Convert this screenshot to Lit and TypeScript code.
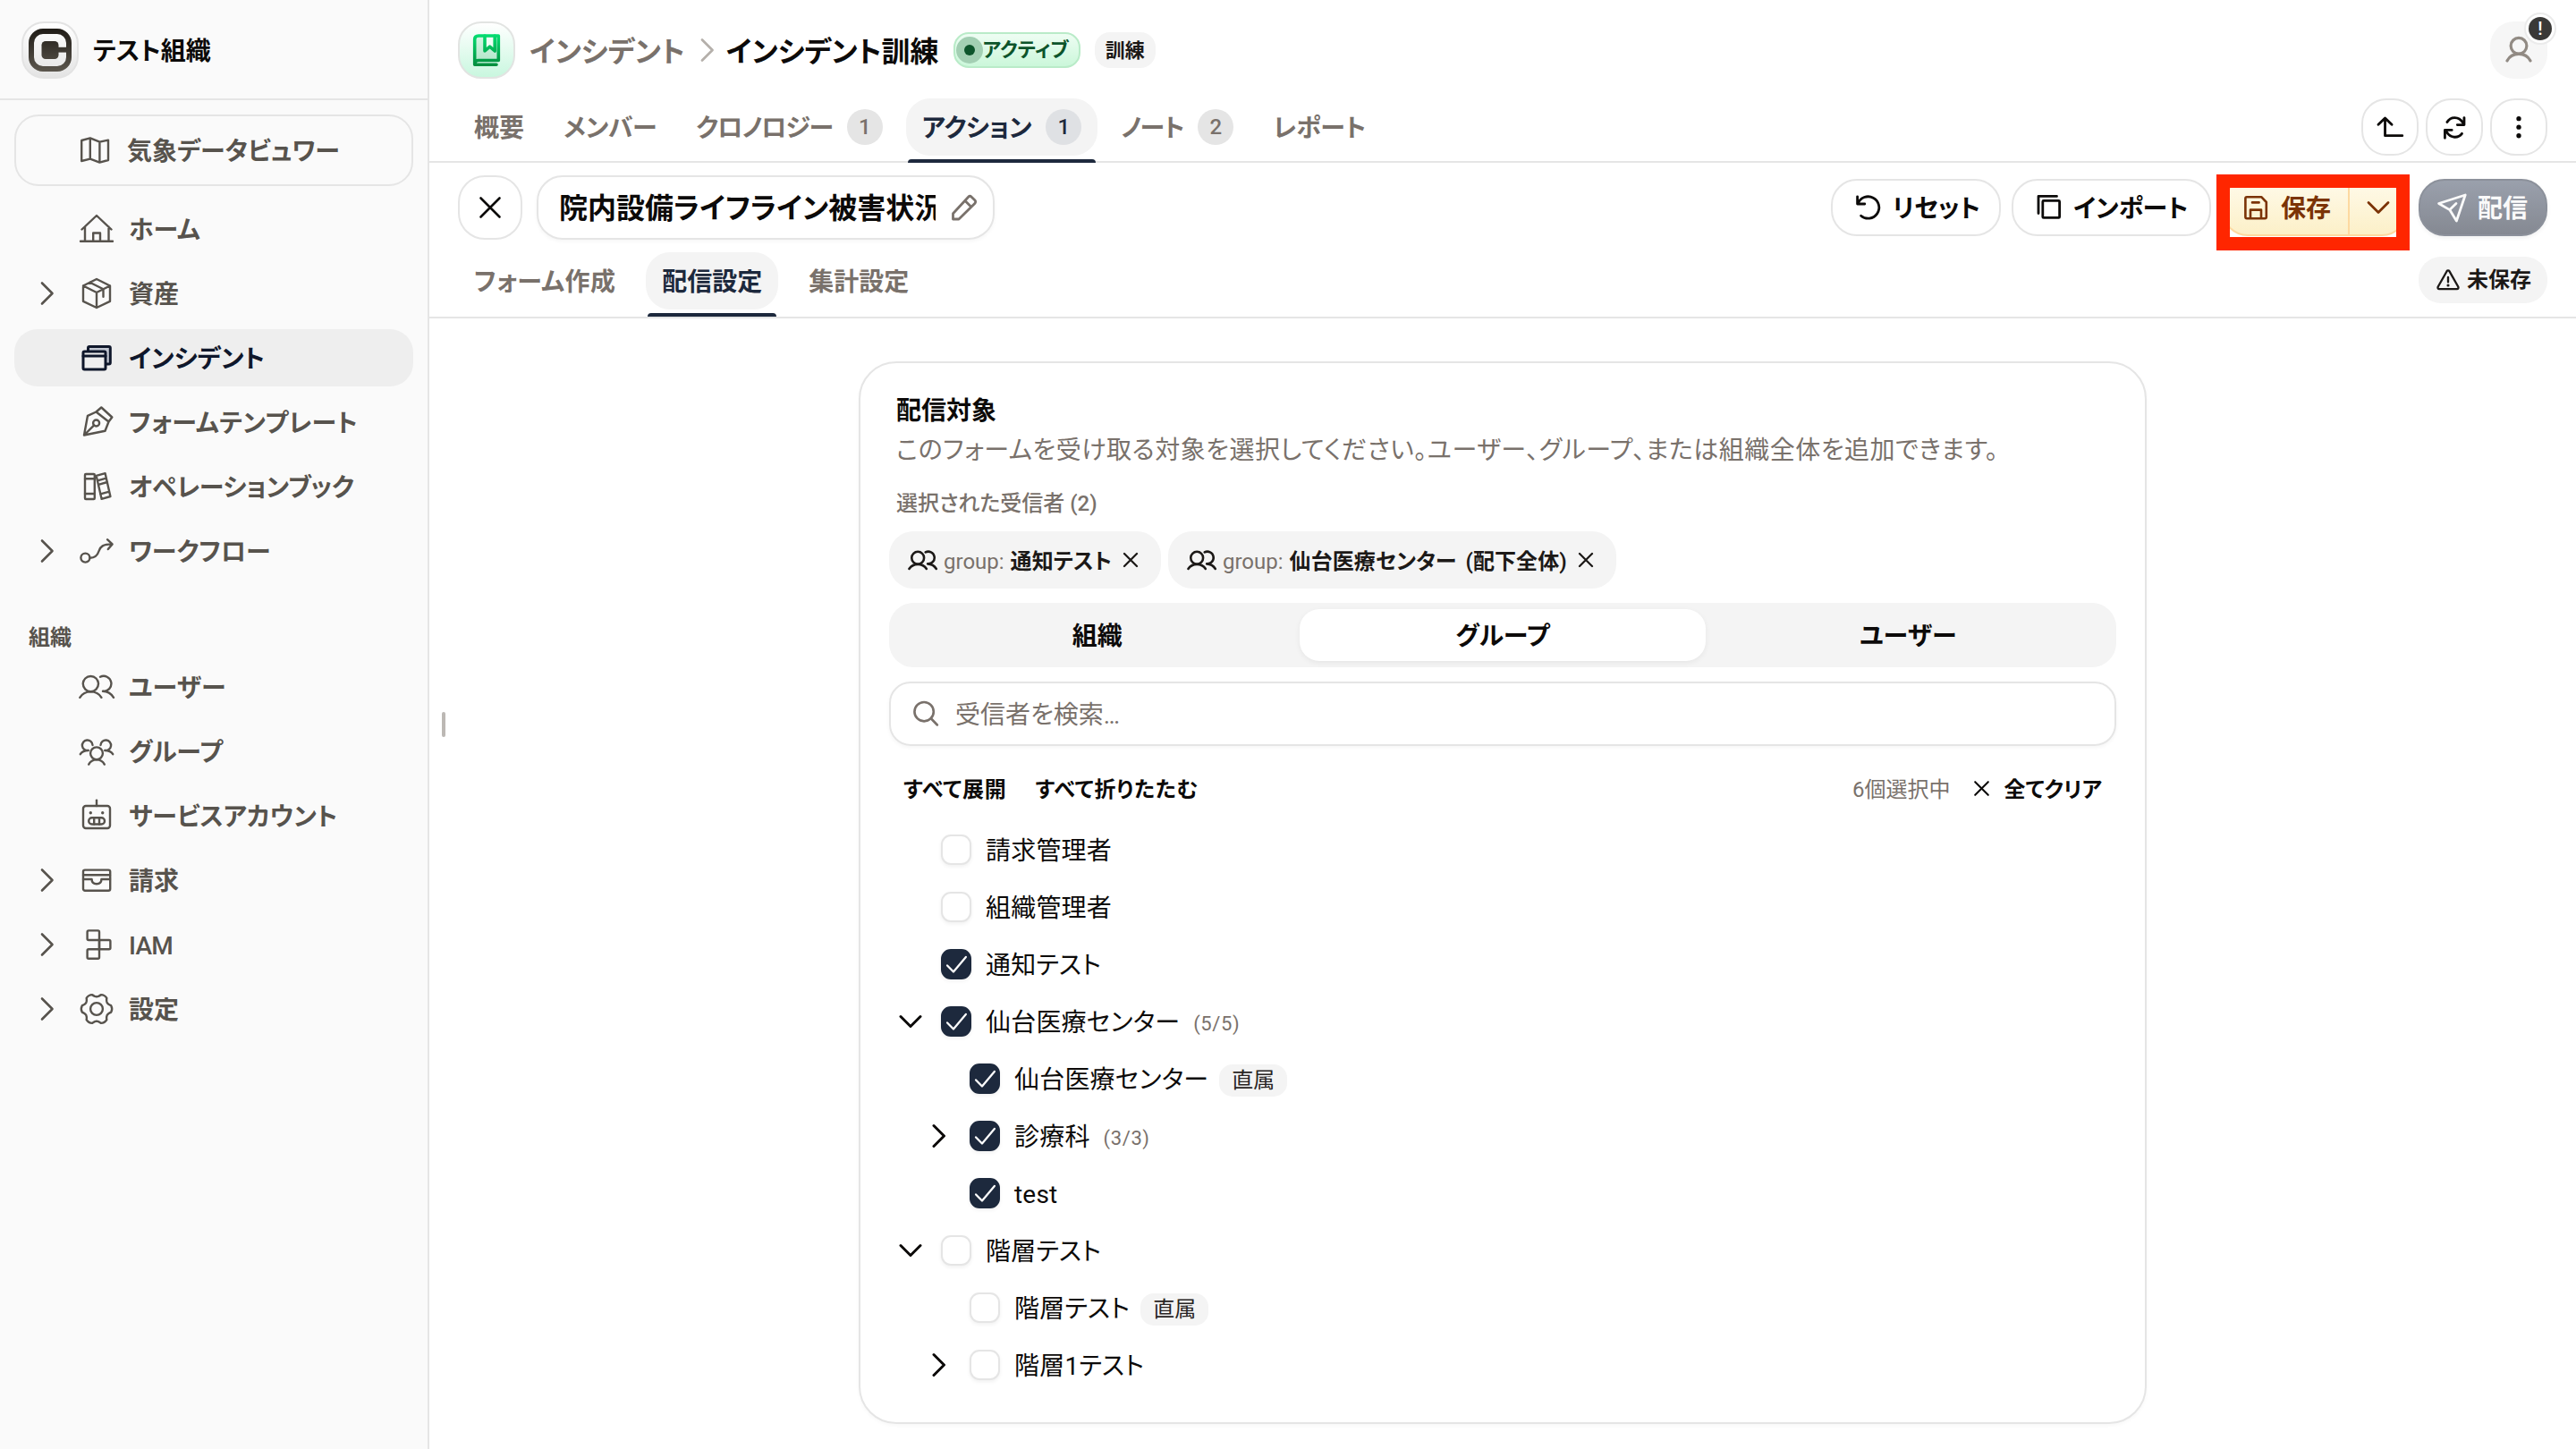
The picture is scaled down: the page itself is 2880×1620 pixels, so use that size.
import { LitElement, html, svg, css, nothing, TemplateResult, SVGTemplateResult } from "lit";
import { customElement, property } from "lit/decorators.js";

const gearPath = (): string => {
  const pt = (deg: number, r: number) => {
    const a = (deg * Math.PI) / 180;
    return `${(18 + r * Math.cos(a)).toFixed(2)} ${(18 + r * Math.sin(a)).toFixed(2)}`;
  };
  let d = "";
  for (let k = 0; k < 6; k++) {
    const c = k * 60;
    d += `${k === 0 ? "M" : "L"}${pt(c - 22, 14.2)} Q${pt(c - 16, 15.2)} ${pt(c - 13, 16.6)} Q${pt(c, 18.2)} ${pt(c + 13, 16.6)} Q${pt(c + 16, 15.2)} ${pt(c + 22, 14.2)} L${pt(c + 30, 13.6)} `;
  }
  return d + "Z";
};

const ICONS: Record<string, SVGTemplateResult> = {
  map: svg`<path d="M3.2 7L12.8 4.4L23.4 8.6L33 6.6V29L23.4 31.6L12.8 27.6L3.2 30Z M12.8 4.4V27.6 M23.4 8.6V31.6"/>`,
  home: svg`<path d="M1.5 18.5L18 3L34.5 18.5 M5 15.5V31.8 M31.5 15.5V31.8 M0 31.8H36 M14.2 31.5V22.5H22V31.5"/>`,
  box: svg`<path d="M18 2L33 9.5V26.8L18 34L3 26.8V9.5Z M3 9.5L18 17L33 9.5 M18 17V34 M10.5 5.8L25.5 13.3V21.8"/>`,
  windows: svg`<rect x="8.5" y="5.5" width="24.8" height="19.5" rx="1.5" fill="#c1c6d1"/><rect x="3" y="11" width="25" height="20" rx="1.5" fill="#efefef"/><path d="M3 16H28"/>`,
  pen: svg`<path d="M4 32.5L8 10.8L17.5 6.5L31.5 17.5L27.5 27.8Z M17.5 6.5L23.3 1.5L35.3 12.5L31.5 17.5 M4 32.5L15.2 21.4"/><circle cx="17.6" cy="19" r="3.5"/>`,
  books: svg`<rect x="5" y="4" width="10.8" height="28" rx="1"/><path d="M5 9.3H15.8 M5 26H15.8 M17.6 5.8L27.6 3.2L33.4 29L23.6 31.8Z M18.9 11.3L28.9 8.6 M20 15.8L30 13 M22.2 26.4L32.2 23.6"/>`,
  flow: svg`<circle cx="5.4" cy="25.6" r="5"/><path d="M10.6 25.8C16.5 25.8 19 23 20.6 18C22.2 13 25 10.6 35.2 10.4 M30 5.2L35.6 10.4L30.8 16"/>`,
  users: svg`<circle cx="11.4" cy="14.6" r="8.6"/><path d="M-.7 29.8C2 25.6 6 23.4 11.4 23.4S20.800 25.600 23.4 29.800 M22 6.800A8.500 8.500 0 1 1 25 22.800C30 23 34 25 37 29.800"/>`,
  group: svg`<circle cx="18" cy="20.300" r="6.900"/><path d="M9.200 32.600C11 29.200 14 27.400 18 27.400S25 29.200 26.800 32.600 M13.500 11A5.800 5.800 0 1 0 8.800 17C4.500 17 1.500 18.300 -.2 21.200 M22.500 11A5.800 5.800 0 1 1 27.200 17C31.500 17 34.500 18.300 36.200 21.200"/>`,
  robot: svg`<rect x="3" y="7" width="30" height="25" rx="3"/><path d="M18 .6V7"/><circle cx="11.3" cy="14.800" r="1.700" fill="currentColor" stroke="none"/><circle cx="24.700" cy="14.800" r="1.700" fill="currentColor" stroke="none"/><rect x="9.200" y="20.300" width="17.800" height="7.200" rx="3.600"/><path d="M15.200 20.300V27.500 M21 20.300V27.500"/>`,
  billing: svg`<rect x="3" y="6.600" width="30.200" height="23.200" rx="2"/><path d="M3 12.200H33 M3 17H12.600C12.600 20.500 15 22.200 18 22.200S23.400 20.500 23.400 17H33"/>`,
  iam: svg`<rect x="7.600" y="2.400" width="13.400" height="10.600" rx="1.500"/><rect x="21" y="13" width="12.400" height="10.200" rx="1.500"/><rect x="7.600" y="23.200" width="13.400" height="10.600" rx="1.500"/><path d="M21 12V24"/>`,
  gear: svg`<circle cx="18" cy="18" r="6.900"/><path d=${gearPath()}/>`,
  right: svg`<path d="M12 6.500L23.500 18L12 29.500"/>`,
  down: svg`<path d="M7 12.500L18 23.500L29 12.500"/>`,
  close: svg`<path d="M7.500 7.500L28.500 28.500 M28.500 7.500L7.500 28.500"/>`,
  book: svg`<defs><linearGradient id="bk" gradientUnits="userSpaceOnUse" x1="0" y1="0" x2="0" y2="36"><stop offset="0" stop-color="#05df72"/><stop offset="1" stop-color="#008c3c"/></linearGradient><linearGradient id="bf" gradientUnits="userSpaceOnUse" x1="0" y1="0" x2="0" y2="36"><stop offset="0" stop-color="#d8f8e6"/><stop offset="1" stop-color="#aee3c6"/></linearGradient></defs><g stroke="url(#bk)"><path fill="url(#bf)" stroke="none" d="M31.300 2H9C6 2 4.700 3.500 4.700 6V33L8.500 29.500H31.300Z"/><path fill="#effdf5" d="M16 2V19L21.600 14.200L27.200 19V2"/><path d="M31.300 2H9C6 2 4.700 3.500 4.700 6V34.300H29 M31.300 2V29.500H9C6.500 29.500 4.900 31 4.700 33.500"/></g>`,
  pencil: svg`<path d="M5.500 24.800L22.600 6.200C23.800 5 25 5 26.200 6.200L29.800 9.800C31 11 31 12.200 29.800 13.400L12 31H5.500Z M19 10.500L25.500 17"/>`,
  reset: svg`<path d="M6.200 13.600A12.200 12.200 0 1 1 9.600 27.200 M5.600 5.800V14H13.800"/>`,
  copy: svg`<path d="M26.500 5.400H6V24.500"/><rect x="10.800" y="10.400" width="18.800" height="19" rx="1"/>`,
  save: svg`<path d="M8 6.200H24.200L29.800 12V28.500C29.800 29.600 29.200 30.200 28.200 30.200H8C7 30.200 6.400 29.600 6.400 28.500V7.800C6.400 6.800 7 6.200 8 6.200Z M12 30V20.600H24V30 M14 12.400H21.600"/>`,
  send: svg`<path d="M2.600 13.500L32.200 4L22.400 33L14.800 20.600Z M14.800 20.600L22 13.600"/>`,
  warn: svg`<path d="M16.200 5.400C17 4 19 4 19.800 5.400L32.600 28C33.200 29.600 32.400 31 30.800 31H5.200C3.600 31 2.800 29.600 3.400 28Z M18 14V21"/><circle cx="18" cy="25.800" r="2" fill="currentColor" stroke="none"/>`,
  search: svg`<circle cx="16" cy="15.500" r="11.300"/><path d="M24.200 23.600L31.600 31.200"/>`,
  person: svg`<circle cx="18" cy="13" r="9.400"/><path d="M4.200 30.600C6.800 25.600 11.500 22.600 18 22.600S29.200 25.600 31.800 30.600"/>`,
  upArrow: svg`<path d="M12.200 8V28.200H32.600 M4.200 15.200L12.200 7.400L20.200 15.200"/>`,
  refresh: svg`<path d="M9.400 12.200C13.400 5.200 23.400 5 28 12.800 M29.600 7V15.400H21.500 M27 25.800C22.600 31.600 13.600 31.400 9.200 24.400 M6.800 31V21.600H15"/>`,
  dots: svg`<g fill="currentColor" stroke="none"><circle cx="18" cy="7.500" r="3"/><circle cx="18" cy="18.200" r="3"/><circle cx="18" cy="29" r="3"/></g>`,
  check: svg`<path d="M7.500 19.500L14.800 27L29.500 9.500"/>`,
};

@customElement("ui-icon")
export class UiIcon extends LitElement {
  @property() name = "";
  @property({ type: Number }) size = 36;
  @property({ type: Number }) stroke = 2.4;
  static styles = css`
    :host { display: block; flex: none; }
    svg { display: block; overflow: visible; }
  `;
  render() {
    return html`<svg width=${this.size} height=${this.size} viewBox="0 0 36 36" fill="none" stroke="currentColor"
      stroke-width=${this.stroke} stroke-linecap="round" stroke-linejoin="round">${ICONS[this.name]}</svg>`;
  }
}

interface NavItem { icon: string; label: string; chevron?: boolean; active?: boolean }

const NAV_MAIN: NavItem[] = [
  { icon: "home", label: "ホーム" },
  { icon: "box", label: "資産", chevron: true },
  { icon: "windows", label: "インシデント", active: true },
  { icon: "pen", label: "フォームテンプレート" },
  { icon: "books", label: "オペレーションブック" },
  { icon: "flow", label: "ワークフロー", chevron: true },
];
const NAV_ORG: NavItem[] = [
  { icon: "users", label: "ユーザー" },
  { icon: "group", label: "グループ" },
  { icon: "robot", label: "サービスアカウント" },
  { icon: "billing", label: "請求", chevron: true },
  { icon: "iam", label: "IAM", chevron: true },
  { icon: "gear", label: "設定", chevron: true },
];

const FONT = css`
  :host { font-family: Roboto, "Noto Sans CJK JP", sans-serif; font-feature-settings: "palt"; font-kerning: normal; }
  * { box-sizing: border-box; }
  .t { padding-top: 3px; }
`;

@customElement("side-nav")
export class SideNav extends LitElement {
  static styles = [FONT, css`
    :host { display: flex; flex-direction: column; width: 480px; flex: none; background: #fafafa; border-right: 2px solid #e5e5e5; box-sizing: border-box; color: #57534d; }
    .org { height: 112px; flex: none; border-bottom: 2px solid #e5e5e5; display: flex; align-items: center; padding: 2px 24px 0; gap: 16px; color: #0c0a09; font-size: 28px; font-weight: 600; line-height: 40px; }
    .logo { width: 64px; height: 64px; border-radius: 25px; border: 2px solid #e3e3e3; background: linear-gradient(#fff, #e4e4e4); display: flex; align-items: center; justify-content: center; }
    .logo svg { display: block; }
    .list { display: flex; flex-direction: column; gap: 8px; padding: 16px 16px 0; }
    .row { height: 64px; border-radius: 26px; display: flex; align-items: center; font-size: 28px; line-height: 40px; font-weight: 600; padding-left: 19px; }
    .row.boxed { height: 80px; border: 2px solid #e5e5e5; border-radius: 27px; padding-left: 15px; margin-bottom: 8px; }
    .row.active { background: #eee; color: #0f172b; }
    .chev { width: 36px; margin-right: 19px; }
    .row .t { padding-left: 18px; }
    .row .latin { font-weight: 500; letter-spacing: -.8px; }
    .row .pen { letter-spacing: .3px; }
    .row .books { letter-spacing: -.3px; }
    .heading { padding: 39px 32px 0; font-size: 24px; line-height: 36px; font-weight: 600; margin-top: 8px; }
    .second { padding-top: 5px; }
  `];
  private row(n: NavItem, boxed = false): TemplateResult {
    return html`<div class="row ${n.active ? "active" : ""} ${boxed ? "boxed" : ""}">
      <div class="chev">${n.chevron ? html`<ui-icon name="right" stroke="2.6"></ui-icon>` : nothing}</div>
      <ui-icon name=${n.icon} stroke=${n.active ? 3 : 2.4}></ui-icon><span class="t ${n.icon === "iam" ? "latin" : n.icon}">${n.label}</span>
    </div>`;
  }
  render() {
    return html`
      <div class="org">
        <div class="logo">
          <svg width="48" height="48" viewBox="0 0 48 48">
            <defs><linearGradient id="lg" gradientUnits="userSpaceOnUse" x1="0" y1="0" x2="0" y2="48"><stop offset="0" stop-color="#1f1b16"/><stop offset="1" stop-color="#5c574e"/></linearGradient></defs>
            <rect x="3" y="3" width="42" height="42" rx="13" fill="none" stroke="url(#lg)" stroke-width="6"/>
            <rect x="14.500" y="14" width="19" height="20" rx="4.500" fill="url(#lg)"/>
            <rect x="31" y="20.800" width="14" height="5.800" fill="url(#lg)"/>
          </svg>
        </div>
        <span class="t">テスト組織</span>
      </div>
      <div class="list">
        ${this.row({ icon: "map", label: "気象データビュワー" }, true)}
        ${NAV_MAIN.map((n) => this.row(n))}
      </div>
      <div class="heading">組織</div>
      <div class="list second">${NAV_ORG.map((n) => this.row(n))}</div>
    `;
  }
}

interface TreeRow { label: string; level: number; checked?: boolean; open?: boolean; closed?: boolean; count?: string; direct?: boolean }

const TREE: TreeRow[] = [
  { label: "請求管理者", level: 0 },
  { label: "組織管理者", level: 0 },
  { label: "通知テスト", level: 0, checked: true },
  { label: "仙台医療センター", level: 0, checked: true, open: true, count: "(5/5)" },
  { label: "仙台医療センター", level: 1, checked: true, direct: true },
  { label: "診療科", level: 1, checked: true, closed: true, count: "(3/3)" },
  { label: "test", level: 1, checked: true },
  { label: "階層テスト", level: 0, open: true },
  { label: "階層テスト", level: 1, direct: true },
  { label: "階層1テスト", level: 1, closed: true },
];

@customElement("recipient-card")
export class RecipientCard extends LitElement {
  static styles = [FONT, css`
    :host { display: flex; flex-direction: column; width: 1440px; height: 1188px; box-sizing: border-box; border: 2px solid #e5e5e5; border-radius: 42px; background: #fff; padding: 32px; color: #0c0a09; font-size: 28px; box-shadow: 0 2px 4px rgba(0,0,0,.03); }
    .title { font-weight: 600; line-height: 40px; padding: 2px 8px 0; }
    .desc { color: #79716b; line-height: 48px; padding: 0 8px; white-space: nowrap; letter-spacing: .5px; }
    .picked { color: #79716b; font-size: 24px; font-weight: 500; line-height: 36px; padding: 0 8px; margin-top: 17px; }
    .chips { display: flex; gap: 8px; margin-top: 13px; }
    .chip { height: 64px; border-radius: 27px; background: #f4f4f4; display: flex; align-items: center; font-size: 24px; line-height: 36px; color: #1c1917; padding: 0 22px 0 23px; }
    .chip .kind { color: #79716b; margin-left: 9px; margin-right: 7px; }
    .chip .name { font-weight: 600; margin-right: 9px; white-space: pre; letter-spacing: .1px; word-spacing: 4px; }
    .seg { height: 72px; margin-top: 16px; background: #f4f4f4; border-radius: 27px; padding: 7px 6px; display: grid; grid-template-columns: repeat(3, 1fr); }
    .seg div { display: flex; align-items: center; justify-content: center; font-weight: 600; line-height: 40px; border-radius: 22px; }
    .seg .on { background: #fff; box-shadow: 0 2px 6px rgba(0,0,0,.06); }
    .search { height: 72px; margin-top: 16px; border: 2px solid #e5e5e5; border-radius: 24px; display: flex; align-items: center; padding-left: 22px; gap: 16px; color: #79716b; line-height: 40px; box-shadow: 0 2px 4px rgba(0,0,0,.04); }
    .search b { font-weight: 400; letter-spacing: -1.8px; }
    .tools { display: flex; align-items: center; height: 48px; margin-top: 23px; font-size: 24px; font-weight: 600; line-height: 36px; padding: 0 16px; gap: 32px; }
    .tools .fold { letter-spacing: .8px; }
    .tools .sel { margin-left: auto; color: #79716b; font-weight: 400; }
    .tools .clear { display: flex; align-items: center; gap: 13px; margin-left: -10px; }
    .tree { display: flex; flex-direction: column; margin-top: 13px; }
    .node { height: 64px; display: flex; align-items: center; line-height: 40px; padding-left: 6px; }
    .node.l1 { padding-left: 38px; }
    .arrow { width: 36px; margin-right: 16px; }
    .cb { width: 34px; height: 34px; border-radius: 11px; border: 2px solid #e5e5e5; background: #fff; box-shadow: 0 2px 4px rgba(0,0,0,.06); display: flex; align-items: center; justify-content: center; margin-right: 16px; color: #fff; }
    .cb.on { background: #1d293d; border-color: #1d293d; }
    .node .t { letter-spacing: .2px; }
    .count { color: #79716b; font-size: 22px; letter-spacing: .6px; margin-left: 15px; padding-top: 6px; }
    .direct { height: 36px; border-radius: 15px; background: #f4f4f4; color: #292524; font-size: 24px; line-height: 37px; padding: 0 14px; margin-left: 12px; margin-top: 4px; }
  `];
  private chip(name: string) {
    return html`<div class="chip"><ui-icon name="users" size="29" stroke="3.2"></ui-icon><span class="kind t">group:</span><span class="name t">${name}</span><ui-icon name="close" size="24" stroke="3.4"></ui-icon></div>`;
  }
  private node(r: TreeRow) {
    const arrow = r.open ? "down" : r.closed ? "right" : "";
    return html`<div class="node ${r.level ? "l1" : ""}">
      <div class="arrow">${arrow ? html`<ui-icon name=${arrow} stroke="3"></ui-icon>` : nothing}</div>
      <div class="cb ${r.checked ? "on" : ""}">${r.checked ? html`<ui-icon name="check" size="34" stroke="2.4"></ui-icon>` : nothing}</div>
      <span class="t">${r.label}</span>
      ${r.count ? html`<span class="count">${r.count}</span>` : nothing}
      ${r.direct ? html`<span class="direct">直属</span>` : nothing}
    </div>`;
  }
  render() {
    return html`
      <div class="title">配信対象</div>
      <div class="desc">このフォームを受け取る対象を選択してください。ユーザー、グループ、または組織全体を追加できます。</div>
      <div class="picked">選択された受信者 (2)</div>
      <div class="chips">${this.chip("通知テスト")}${this.chip("仙台医療センター (配下全体)")}</div>
      <div class="seg"><div><span class="t">組織</span></div><div class="on"><span class="t">グループ</span></div><div><span class="t">ユーザー</span></div></div>
      <div class="search"><ui-icon name="search" size="34" stroke="2.8"></ui-icon><span class="t">受信者を検索<b>...</b></span></div>
      <div class="tools">
        <span class="t fold">すべて展開</span><span class="t fold">すべて折りたたむ</span><span class="sel t">6個選択中</span>
        <span class="clear"><ui-icon name="close" size="25" stroke="3"></ui-icon><span class="t">全てクリア</span></span>
      </div>
      <div class="tree">${TREE.map((r) => this.node(r))}</div>
    `;
  }
}

@customElement("app-root")
export class AppRoot extends LitElement {
  static styles = [FONT, css`
    :host { display: flex; width: 100vw; height: 100vh; overflow: hidden; background: #fff; color: #0c0a09; font-size: 28px; line-height: 40px; }
    .main { flex: 1; min-width: 0; display: flex; flex-direction: column; }
    .top { height: 112px; flex: none; display: flex; align-items: center; padding: 0 32px; }
    .bookbox { width: 64px; height: 64px; border-radius: 26px; border: 2px solid #e2e4e2; background: linear-gradient(#fff, #c9f7df); display: flex; align-items: center; justify-content: center; margin-right: 16px; }
    .crumb { font-size: 32px; font-weight: 600; color: #79716b; }
    .sep { color: #b5b0ab; margin: 0 3px 0 7px; }
    .crumb.now { color: #0c0a09; margin-right: 16px; }
    .status { height: 40px; border-radius: 17px; border: 2px solid #b9ebc8; background: linear-gradient(#eefdf3, #cbf7da); display: flex; align-items: center; color: #0d542b; font-size: 22px; font-weight: 600; line-height: 32px; padding: 0 11px 0 1px; margin-right: 16px; }
    .pulse { width: 30px; height: 30px; border-radius: 50%; background: #a3cfb3; display: flex; align-items: center; justify-content: center; }
    .pulse i { width: 12px; height: 12px; border-radius: 50%; background: #0d542b; }
    .tag { height: 40px; border-radius: 17px; background: #f4f4f4; padding: 0 12px; font-size: 22px; font-weight: 600; line-height: 41px; color: #1c1917; }
    .avatar { position: relative; margin-left: auto; width: 64px; height: 64px; border-radius: 27px; background: #f6f6f6; display: flex; align-items: center; justify-content: center; color: #918a83; }
    .alert { position: absolute; left: 38px; top: -10px; width: 36px; height: 36px; border-radius: 50%; border: 2px solid #ebebeb; background: #fff; display: flex; align-items: center; justify-content: center; }
    .alert b { width: 26px; height: 26px; border-radius: 50%; background: #3a3937; color: #fff; font-size: 20px; font-weight: 500; line-height: 26px; text-align: center; }
    .tabs { height: 70px; flex: none; border-bottom: 2px solid #e5e5e5; padding: 0 32px; display: flex; align-items: flex-start; gap: 8px; }
    .tab { height: 70px; margin-top: -2px; display: flex; flex-direction: column; justify-content: space-between; align-items: stretch; color: #79716b; font-weight: 600; }
    .tab .pill { height: 64px; padding: 0 18px; border-radius: 27px; display: flex; align-items: center; gap: 16px; white-space: nowrap; }
    .tab .bar { height: 4px; margin: 0 2px; border-radius: 4px 4px 0 0; }
    .tab.on { color: #1d293d; height: 72px; }
    .tab.on .pill { background: #f4f4f4; }
    .tab.on .bar { background: #1d293d; }
    .tight { letter-spacing: -1.1px; }
    .snug { letter-spacing: -.3px; }
    .loose { letter-spacing: .4px; }
    .num { width: 40px; height: 40px; border-radius: 50%; background: #e5e5e5; font-size: 24px; line-height: 41px; text-align: center; font-weight: 500; }
    .tab.on .num { background: #dfe1e4; }
    .round { display: flex; gap: 8px; margin-left: auto; margin-top: -2px; }
    .round div { width: 64px; height: 64px; border-radius: 28px; border: 2px solid #e5e5e5; display: flex; align-items: center; justify-content: center; }
    .bar2 { height: 100px; flex: none; display: flex; align-items: center; padding: 0 32px; }
    .x { width: 72px; height: 72px; border-radius: 30px; border: 2px solid #e5e5e5; display: flex; align-items: center; justify-content: center; margin-right: 16px; }
    .name { width: 512px; height: 72px; border-radius: 29px; border: 2px solid #e5e5e5; box-shadow: 0 2px 4px rgba(0,0,0,.04); display: flex; align-items: center; padding-left: 23px; color: #79716b; }
    .name span { width: 421px; overflow: hidden; white-space: nowrap; font-size: 32px; font-weight: 600; color: #0c0a09; margin-right: 14px; line-height: 48px; padding-top: 2px; }
    .actions { margin-left: auto; display: flex; gap: 12px; font-weight: 600; }
    .btn { height: 64px; border-radius: 29px; border: 2px solid #e5e5e5; display: flex; align-items: center; gap: 9px; white-space: nowrap; }
    .reset { width: 190px; padding-left: 22px; }
    .import { width: 223px; padding-left: 22px; }
    .savewrap { position: relative; width: 208px; }
    .save { width: 208px; background: linear-gradient(#fffaea, #fcf0c8); border-color: #fdd9a0; color: #7b3306; padding-left: 18px; gap: 0; }
    .save span { margin-left: 10px; width: 75px; }
    .save i { width: 2px; height: 60px; background: #fdd9a0; margin-right: 14px; }
    .mark { position: absolute; left: -6px; top: -5px; width: 216px; height: 85px; border: 15px solid #ff2600; }
    .publish { width: 144px; padding-left: 18px; gap: 10px; color: #fafafa; background: linear-gradient(#9aa0ac, #858992); border-color: #8c919b; box-shadow: 0 2px 5px rgba(0,0,0,.06); }
    .tabs.sub { height: 74px; gap: 16px; }
    .sub .tab { margin-top: 0; }
    .sub .tab.on { height: 72px; }
    .unsaved { margin-left: auto; margin-top: 5px; width: 144px; height: 52px; border-radius: 25px; background: #f4f4f4; color: #1c1917; font-size: 24px; font-weight: 600; display: flex; align-items: center; padding-left: 19px; gap: 7px; }
    .body { flex: 1; display: flex; align-items: flex-start; padding-left: 14px; }
    .grip { width: 4px; height: 28px; border-radius: 2px; background: #bcb8b4; align-self: flex-start; margin-top: 440px; }
    .center { flex: 1; display: flex; justify-content: center; padding-top: 48px; padding-right: 18px; }
  `];
  private tab(label: string, num = "", on = false, tracking = "") {
    return html`<div class="tab ${on ? "on" : ""}"><div class="pill"><span class="t ${tracking}">${label}</span>${num ? html`<span class="num">${num}</span>` : nothing}</div><div class="bar"></div></div>`;
  }
  render() {
    return html`
      <side-nav></side-nav>
      <div class="main">
        <div class="top">
          <div class="bookbox"><ui-icon name="book" stroke="3.6"></ui-icon></div>
          <span class="crumb t">インシデント</span>
          <ui-icon class="sep" name="right" stroke="2.8"></ui-icon>
          <span class="crumb now t">インシデント訓練</span>
          <div class="status"><div class="pulse"><i></i></div><span>アクティブ</span></div>
          <div class="tag">訓練</div>
          <div class="avatar"><ui-icon name="person" stroke="3.4" size="34"></ui-icon><div class="alert"><b>!</b></div></div>
        </div>
        <div class="tabs">
          ${this.tab("概要")}${this.tab("メンバー", "", false, "snug")}${this.tab("クロノロジー", "1", false, "tight")}${this.tab("アクション", "1", true, "snug")}${this.tab("ノート", "2", false, "tight")}${this.tab("レポート")}
          <div class="round">
            <div><ui-icon name="upArrow" size="34" stroke="3"></ui-icon></div>
            <div><ui-icon name="refresh" size="34" stroke="3"></ui-icon></div>
            <div><ui-icon name="dots" size="32"></ui-icon></div>
          </div>
        </div>
        <div class="bar2">
          <div class="x"><ui-icon name="close" stroke="2.6"></ui-icon></div>
          <div class="name"><span>院内設備ライフライン被害状況</span><ui-icon name="pencil" stroke="2.8"></ui-icon></div>
          <div class="actions">
            <div class="btn reset"><ui-icon name="reset" stroke="2.8"></ui-icon><span class="t">リセット</span></div>
            <div class="btn import"><ui-icon name="copy" stroke="2.8"></ui-icon><span class="t">インポート</span></div>
            <div class="savewrap">
              <div class="btn save"><ui-icon name="save" stroke="2.6"></ui-icon><span class="t">保存</span><i></i><ui-icon name="down" stroke="2.8"></ui-icon></div>
              <div class="mark"></div>
            </div>
            <div class="btn publish"><ui-icon name="send" stroke="2.8"></ui-icon><span class="t">配信</span></div>
          </div>
        </div>
        <div class="tabs sub">
          ${this.tab("フォーム作成", "", false, "loose")}${this.tab("配信設定", "", true)}${this.tab("集計設定")}
          <div class="unsaved"><ui-icon name="warn" size="28" stroke="3"></ui-icon><span>未保存</span></div>
        </div>
        <div class="body">
          <div class="grip"></div>
          <div class="center"><recipient-card></recipient-card></div>
        </div>
      </div>
    `;
  }
}
